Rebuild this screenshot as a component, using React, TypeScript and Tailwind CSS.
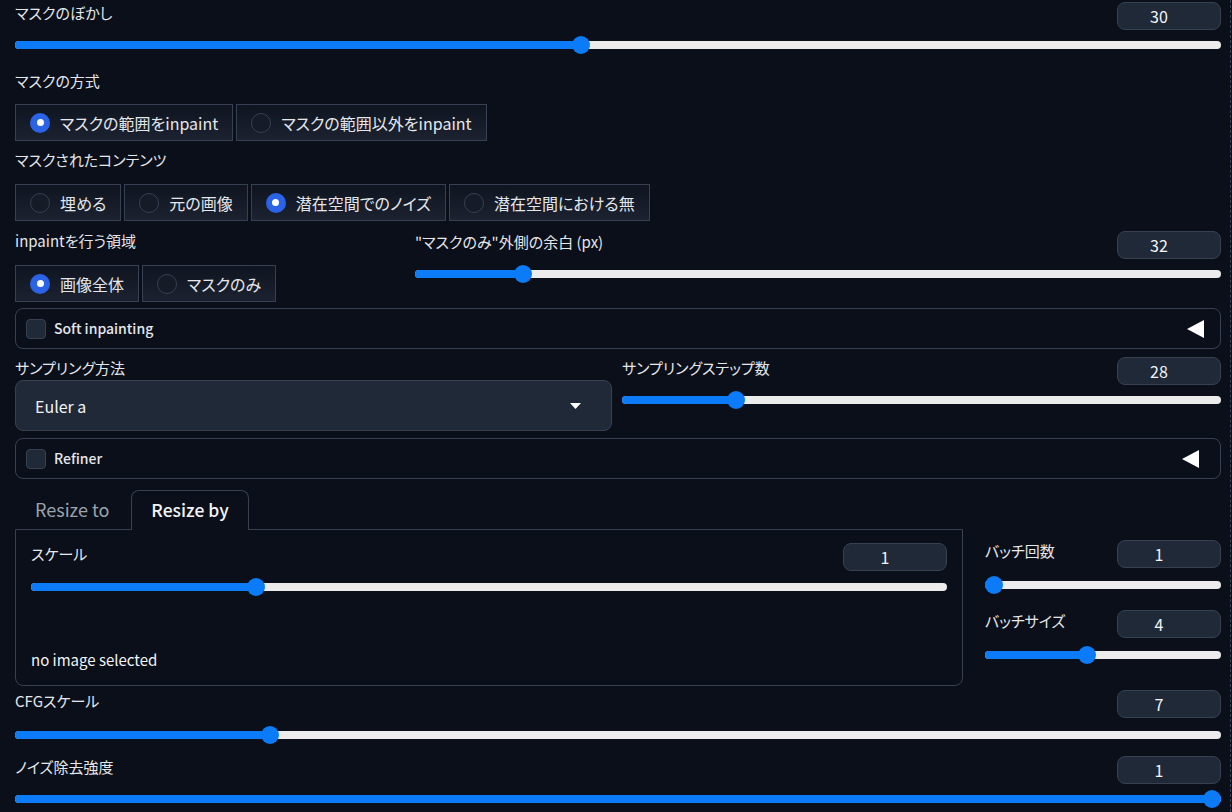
import React from "react";

const font = { fontFamily: '"Noto Sans CJK JP", "Noto Sans", sans-serif' };

function NumberBox({ value }: { value: string }) {
  return (
    <div className="flex h-[28px] w-[104px] items-center justify-center rounded-lg border border-[#374151] bg-[#1f2937] pr-[20px] text-[16px] text-[#f3f4f6]">
      {value}
    </div>
  );
}

function Slider({ pct }: { pct: number }) {
  return (
    <div className="relative h-[18px] w-full">
      <div className="absolute left-0 right-0 top-[5px] h-[8px] rounded-full bg-[#ececec]" />
      <div
        className="absolute left-0 top-[5px] h-[8px] rounded-full bg-[#0b7bf7]"
        style={{ width: `calc(${pct} * (100% - 18px) + 9px)` }}
      />
      <div
        className="absolute top-0 h-[18px] w-[18px] rounded-full bg-[#0b7bf7]"
        style={{ left: `calc(${pct} * (100% - 18px))` }}
      />
    </div>
  );
}

function SliderField({
  label,
  value,
  pct,
  gap = "mt-[7px]",
}: {
  label: string;
  value: string;
  pct: number;
  gap?: string;
}) {
  return (
    <div className="flex flex-col">
      <div className="flex items-start justify-between">
        <span className="text-[15px] leading-[22px] text-[#e5e7eb]">{label}</span>
        <NumberBox value={value} />
      </div>
      <div className={gap}>
        <Slider pct={pct} />
      </div>
    </div>
  );
}

function RadioGroup({ items, selected }: { items: string[]; selected: number }) {
  return (
    <div className="flex gap-[3px]">
      {items.map((item, i) => (
        <div
          key={item}
          className="flex h-[37px] items-center gap-[10px] border border-[#374151] bg-gradient-to-b from-[#0f1420] to-[#1c2230] pl-[14px] pr-[14px] text-[16px] text-[#e5e7eb]"
        >
          {i === selected ? (
            <div className="flex h-[20px] w-[20px] items-center justify-center rounded-full bg-[#2b63e6]">
              <div className="h-[7px] w-[7px] rounded-full bg-white" />
            </div>
          ) : (
            <div className="h-[20px] w-[20px] rounded-full border border-[#374151] bg-[#151b27]" />
          )}
          <span>{item}</span>
        </div>
      ))}
    </div>
  );
}

function Accordion({ label, arrowPad }: { label: string; arrowPad: string }) {
  return (
    <div className={`flex h-[41px] items-center justify-between rounded-lg border border-[#374151] pl-[10px] ${arrowPad}`}>
      <div className="flex items-center gap-[8px]">
        <div className="h-[20px] w-[20px] rounded-[4px] border border-[#374151] bg-[#1f2937]" />
        <span className="text-[14px] font-medium text-[#e5e7eb]">{label}</span>
      </div>
      <svg width="17" height="18" viewBox="0 0 17 18">
        <polygon points="17,0 17,18 0,9" fill="#ffffff" />
      </svg>
    </div>
  );
}

export default function App() {
  return (
    <div className="min-h-screen bg-[#0b0f19] [font-feature-settings:'palt']" style={font}>
      <div className="w-[1231px] border-r border-dashed border-[#3b4252] pb-[4px] pl-[15px] pr-[9px] pt-[2px]">
        <SliderField label="マスクのぼかし" value="30" pct={30 / 64} gap="mt-[6px]" />

        <div className="mt-[17px] text-[15px] leading-[20px] text-[#e5e7eb]">マスクの方式</div>
        <div className="mt-[13px]">
          <RadioGroup items={["マスクの範囲をinpaint", "マスクの範囲以外をinpaint"]} selected={0} />
        </div>

        <div className="mt-[9px] text-[15px] leading-[20px] text-[#e5e7eb]">マスクされたコンテンツ</div>
        <div className="mt-[14px]">
          <RadioGroup items={["埋める", "元の画像", "潜在空間でのノイズ", "潜在空間における無"]} selected={2} />
        </div>

        <div className="mt-[10px] flex gap-[15px]">
          <div className="flex w-[385px] flex-col">
            <div className="text-[15px] leading-[20px] text-[#e5e7eb]">inpaintを行う領域</div>
            <div className="mt-[14px]">
              <RadioGroup items={["画像全体", "マスクのみ"]} selected={0} />
            </div>
          </div>
          <div className="flex-1">
            <SliderField label={'"マスクのみ"外側の余白 (px)'} value="32" pct={32 / 256} gap="mt-[6px]" />
          </div>
        </div>

        <div className="mt-[6px]">
          <Accordion label="Soft inpainting" arrowPad="pr-[16px]" />
        </div>

        <div className="mt-[8px] flex gap-[10px]">
          <div className="flex w-[597px] flex-col">
            <div className="text-[15px] leading-[22px] text-[#e5e7eb]">サンプリング方法</div>
            <div className="mt-[1px] flex h-[51px] items-center justify-between rounded-lg border border-[#374151] bg-[#1f2937] pl-[19px] pr-[30px]">
              <span className="text-[16px] text-[#f3f4f6]">Euler a</span>
              <svg width="11" height="6" viewBox="0 0 11 6">
                <polygon points="0,0 11,0 5.5,6" fill="#ffffff" />
              </svg>
            </div>
          </div>
          <div className="flex-1">
            <SliderField label="サンプリングステップ数" value="28" pct={27 / 149} gap="mt-[6px]" />
          </div>
        </div>

        <div className="mt-[7px]">
          <Accordion label="Refiner" arrowPad="pr-[21px]" />
        </div>

        <div className="mt-[11px] flex gap-[22px]">
          <div className="flex w-[948px] flex-col">
            <div className="flex h-[39px] items-stretch gap-[2px]">
              <div className="flex items-center px-[20px] text-[18px] text-[#9ca3af]">Resize to</div>
              <div className="relative z-10 -mb-px flex items-center rounded-t-lg border border-b-0 border-[#374151] bg-[#0b0f19] px-[19px] text-[17.5px] font-medium text-[#f3f4f6]">
                Resize by
              </div>
            </div>
            <div className="flex h-[157px] flex-col rounded-b-lg border border-[#374151] px-[15px] pt-[13px]">
              <SliderField label="スケール" value="1" pct={0.95 / 3.95} gap="mt-[7px]" />
              <div className="mt-[54px] text-[15px] leading-[20px] text-[#f3f4f6]">no image selected</div>
            </div>
          </div>
          <div className="flex flex-1 flex-col pt-[50px]">
            <SliderField label="バッチ回数" value="1" pct={0} gap="mt-[8px]" />
            <div className="mt-[16px]">
              <SliderField label="バッチサイズ" value="4" pct={3 / 7} gap="mt-[8px]" />
            </div>
          </div>
        </div>

        <div className="mt-[4px]">
          <SliderField label="CFGスケール" value="7" pct={6 / 29} gap="mt-[8px]" />
        </div>
        <div className="mt-[12px]">
          <SliderField label="ノイズ除去強度" value="1" pct={1} gap="mt-[6px]" />
        </div>
      </div>
    </div>
  );
}
